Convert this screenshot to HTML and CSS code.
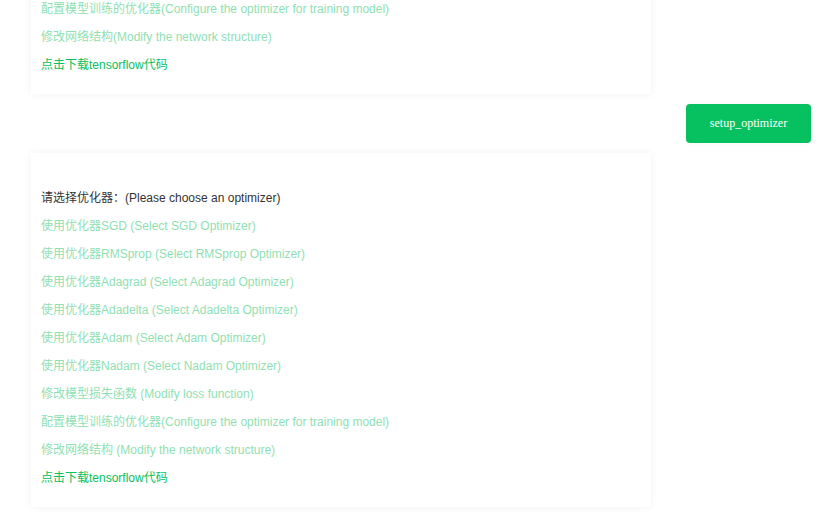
FILE: index.html
```html
<!DOCTYPE html>
<html>
<head>
<meta charset="utf-8">
<link rel="stylesheet" href="styles.css">
</head>
<body>
<div class="chat">
  <div class="card card-first">
    <div class="line light">配置模型训练的优化器(Configure the optimizer for training model)</div>
    <div class="line light">修改网络结构(Modify the network structure)</div>
    <div class="line link">点击下载tensorflow代码</div>
  </div>
  <div class="row-right">
    <button class="btn">setup_optimizer</button>
  </div>
  <div class="card">
    <div class="line dark">请选择优化器：(Please choose an optimizer)</div>
    <div class="line light">使用优化器SGD (Select SGD Optimizer)</div>
    <div class="line light">使用优化器RMSprop (Select RMSprop Optimizer)</div>
    <div class="line light">使用优化器Adagrad (Select Adagrad Optimizer)</div>
    <div class="line light">使用优化器Adadelta (Select Adadelta Optimizer)</div>
    <div class="line light">使用优化器Adam (Select Adam Optimizer)</div>
    <div class="line light">使用优化器Nadam (Select Nadam Optimizer)</div>
    <div class="line light">修改模型损失函数 (Modify loss function)</div>
    <div class="line light">配置模型训练的优化器(Configure the optimizer for training model)</div>
    <div class="line light">修改网络结构 (Modify the network structure)</div>
    <div class="line link">点击下载tensorflow代码</div>
  </div>
</div>
</body>
</html>
```
FILE: styles.css
```css
html, body {
  margin: 0;
  padding: 0;
  background: #ffffff;
  overflow: hidden;
}
.chat {
  display: flex;
  flex-direction: column;
  gap: 10px;
  padding: 0 8px 20px 31px;
  margin-top: -36px;
  font-family: "Liberation Sans", "Noto Sans CJK SC", sans-serif;
  font-size: 12px;
}
.card {
  width: 620px;
  box-sizing: border-box;
  padding: 30px 10px 16px;
  background: #fff;
  box-shadow: 0 0 8px rgba(0, 0, 0, 0.06);
}
.line {
  height: 27px;
  padding-top: 1px;
  line-height: 28px;
  white-space: nowrap;
}
.dark { color: #333333; }
.light { color: #8fdfb2; }
.link { color: #07c160; }
.row-right {
  display: flex;
  justify-content: flex-end;
}
.btn {
  width: 125px;
  height: 39px;
  border: none;
  border-radius: 4px;
  background: #07c160;
  color: #ffffff;
  font-family: "Liberation Serif", serif;
  font-size: 12px;
  padding: 0;
  box-shadow: 0 0 6px rgba(0, 0, 0, 0.04);
}
```
